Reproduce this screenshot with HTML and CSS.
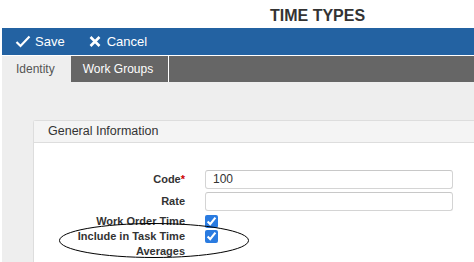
FILE: index.html
```html
<!DOCTYPE html>
<html>
<head>
    <title>Time Types</title>
    <link rel="stylesheet" href="styles.css">
</head>
<body>
    <h1 class="page-title">TIME TYPES</h1>

    <div class="app">
        <div class="toolbar">
            <button class="tool-btn">
                <svg class="icon-check" width="16" height="13" viewBox="0 0 16 13">
                    <polyline points="1.5,7 5.5,11 14.5,1.5" fill="none" stroke="#fff" stroke-width="2.2"/>
                </svg>
                Save
            </button>
            <button class="tool-btn">
                <svg class="icon-x" width="12" height="11" viewBox="0 0 12 11">
                    <path d="M1.5 1 L10.5 10 M10.5 1 L1.5 10" stroke="#fff" stroke-width="2.6"/>
                </svg>
                Cancel
            </button>
        </div>

        <div class="tabs">
            <div class="tab active">Identity</div>
            <div class="tab">Work Groups</div>
        </div>

        <div class="content">
            <div class="panel">
                <div class="panel-header">General Information</div>
                <div class="panel-body">
                    <div class="form-row">
                        <label for="code">Code<span class="req">*</span></label>
                        <input type="text" id="code" value="100">
                    </div>
                    <div class="form-row">
                        <label for="rate">Rate</label>
                        <input type="text" id="rate">
                    </div>
                    <div class="form-row check-row first-check">
                        <label for="wot">Work Order Time</label>
                        <input type="checkbox" id="wot" checked>
                    </div>
                    <div class="form-row check-row">
                        <label for="avg">Include in Task Time Averages</label>
                        <input type="checkbox" id="avg" checked>
                    </div>
                </div>
            </div>
        </div>
    </div>

    <!-- annotation circled on the screenshot -->
    <svg class="annotation" width="194" height="38" viewBox="0 0 194 38">
        <ellipse cx="96" cy="18.5" rx="94.5" ry="17" fill="none" stroke="#000" stroke-width="1"/>
    </svg>
</body>
</html>
```

FILE: styles.css
```css
/* Basic styling */
body {
    margin: 0;
    font-family: "Liberation Sans", Arial, sans-serif;
    background-color: #fff;
    color: #333;
    overflow: hidden;
    height: 262px;
}
.page-title {
    margin: 0;
    height: 28px;
    box-sizing: border-box;
    padding: 4px 0 0 270px;
    font-size: 16px;
    line-height: 24px;
    font-weight: bold;
    color: #333;
}
.app {
    margin-left: 2px;
}
/* Blue action bar */
.toolbar {
    display: flex;
    align-items: center;
    height: 27px;
    padding-left: 13px;
    background-color: #2362a2;
    border-bottom: 1px solid #fff;
}
.tool-btn {
    display: flex;
    align-items: center;
    gap: 4px;
    padding: 0;
    margin-right: 24px;
    border: none;
    background: none;
    color: #fff;
    font-family: inherit;
    font-size: 13px;
}
.icon-x {
    margin-right: 2px;
}
/* Tabs */
.tabs {
    display: flex;
    height: 26px;
    background-color: #666;
}
.tab {
    padding: 0 15px 0 12px;
    line-height: 26px;
    font-size: 12px;
    color: #fff;
    border-right: 1px solid #fff;
}
.tab.active {
    padding: 0 16px 0 14px;
    background-color: #eee;
    color: #555;
    border-right: none;
}
/* Content area */
.content {
    box-sizing: border-box;
    background-color: #eee;
    padding: 38px 0 0 31px;
    height: 180px;
}
.panel {
    box-sizing: border-box;
    background-color: #fff;
    border: 1px solid #ddd;
    border-right: none;
    border-bottom: none;
    border-radius: 3px 0 0 0;
    height: 100%;
}
.panel-header {
    background-color: #f4f4f4;
    border-bottom: 1px solid #ddd;
    height: 21px;
    line-height: 21px;
    padding-left: 14px;
    font-size: 12.5px;
    color: #333;
}
.panel-body {
    padding: 25px 0 0 36px;
}
.form-row {
    display: grid;
    grid-template-columns: 115px 248px;
    column-gap: 20px;
    align-items: center;
    min-height: 22px;
}
.form-row label {
    text-align: right;
    font-size: 11px;
    font-weight: bold;
    color: #333;
    line-height: 15px;
}
.req {
    color: #c00;
}
input[type="text"] {
    box-sizing: border-box;
    height: 19px;
    width: 100%;
    padding: 0 7px;
    border: 1px solid #d4d4d4;
    border-top-color: #c8c8c8;
    border-radius: 3px;
    font-family: inherit;
    font-size: 12px;
    color: #333;
}
.check-row {
    min-height: 15px;
    align-items: start;
}
.first-check {
    margin-top: 2px;
}
input[type="checkbox"] {
    width: 13px;
    height: 13px;
    margin: 1px 0 0 0;
    accent-color: #2a7be0;
}
/* hand drawn ellipse over the last row */
.annotation {
    position: absolute;
    left: 58px;
    top: 222px;
}
```
